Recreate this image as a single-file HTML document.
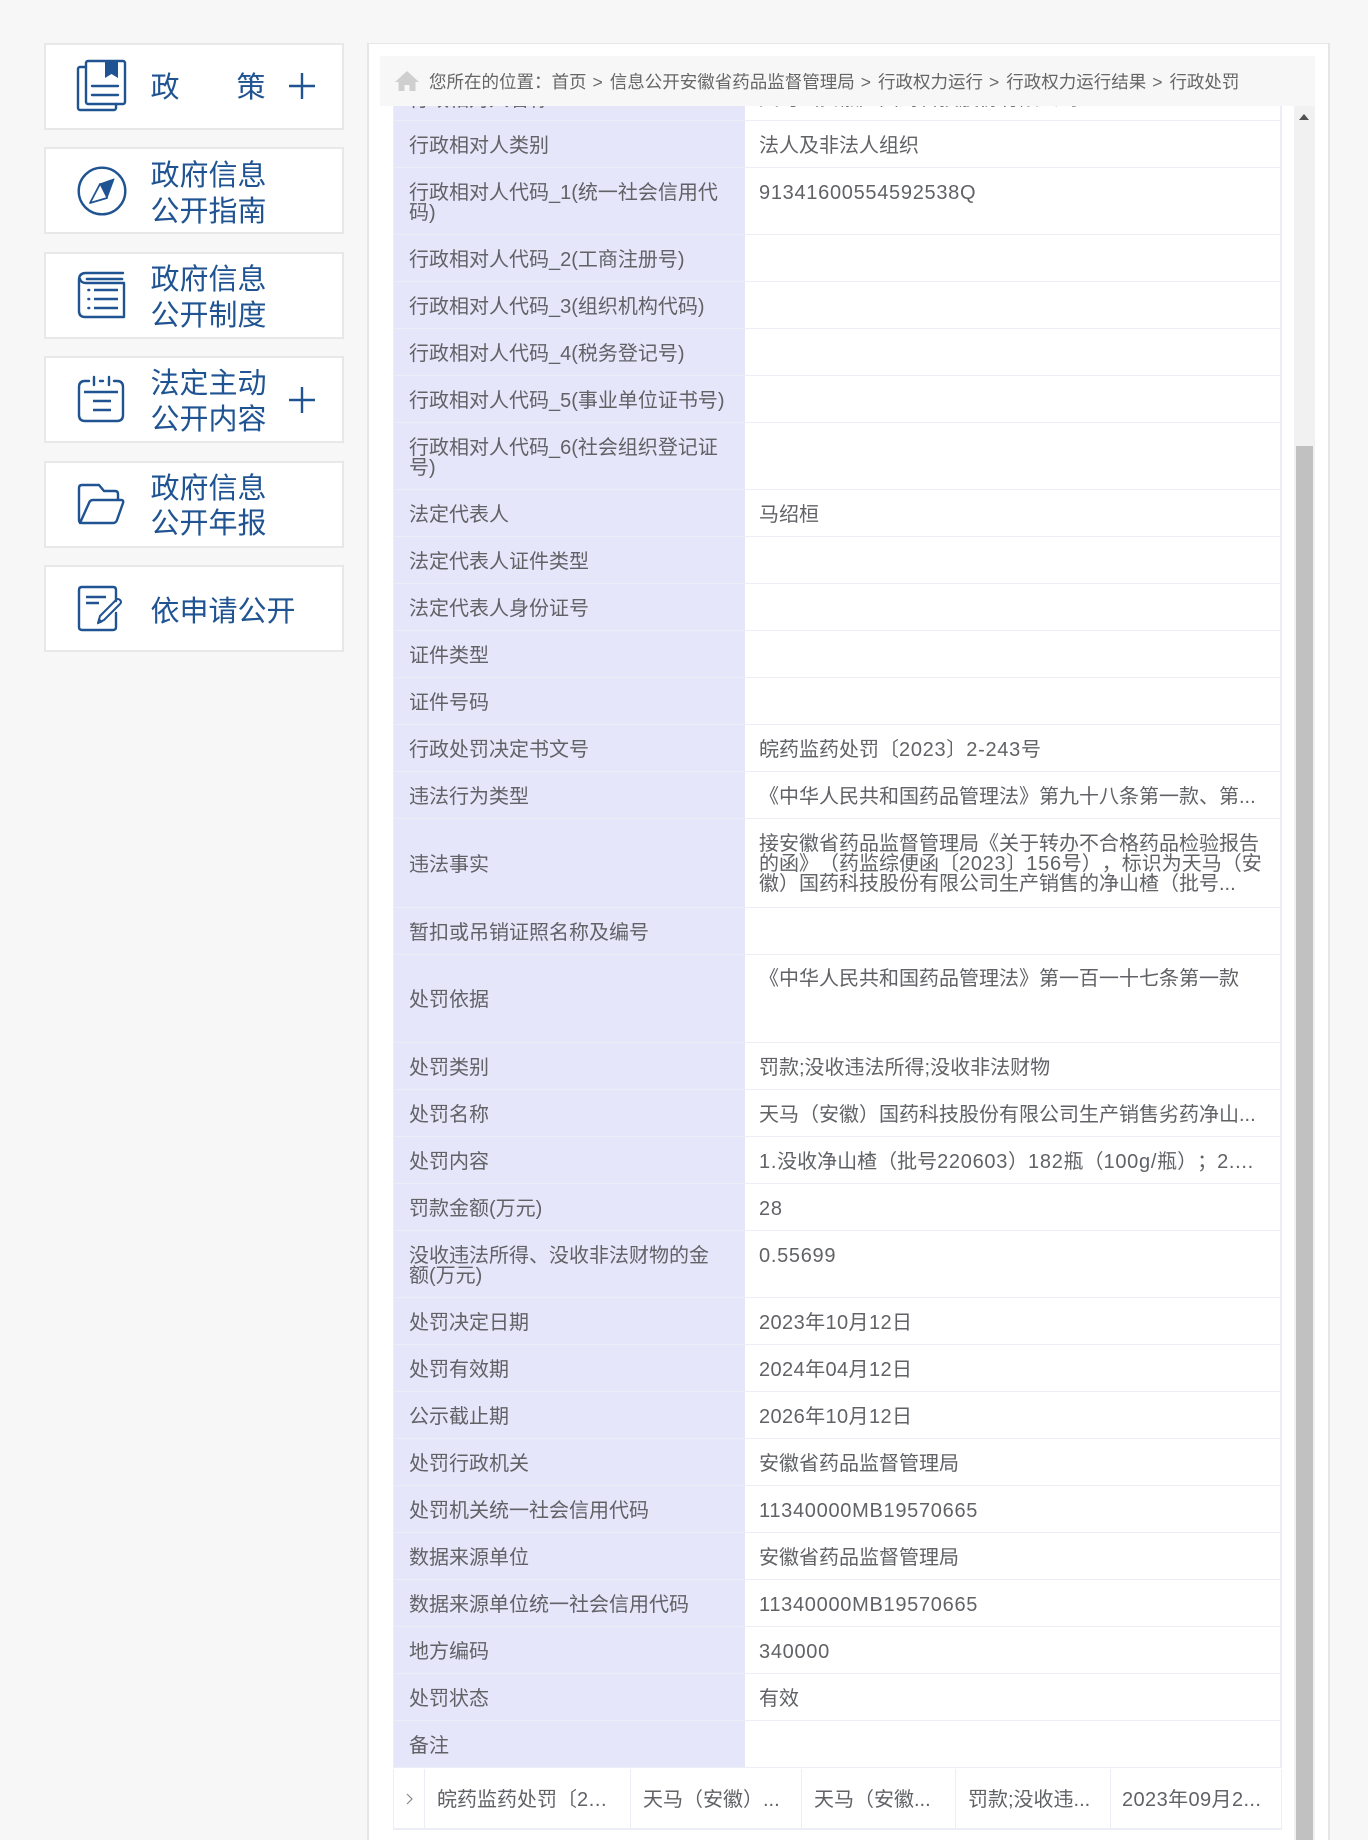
<!DOCTYPE html>
<html lang="zh-CN"><head><meta charset="utf-8"><title>行政处罚</title>
<style>
html,body{margin:0;padding:0;width:1368px;height:1840px;overflow:hidden}
body{position:relative;background:#f7f7f7;font-family:"Liberation Sans","Noto Sans CJK SC",sans-serif;color:#606266;text-spacing-trim:space-all}
.box{position:absolute;left:44px;width:296px;height:83px;background:#fff;border:2px solid #e8e8e8}
.st{position:absolute;left:150.500px;font-size:29px;line-height:35.5px;color:#1f5391;white-space:nowrap}
.panel{position:absolute;left:367px;top:43px;width:959px;height:1797px;background:#fff;border:1px solid #e6e6e6;border-width:1px 2px 0;overflow:hidden}
.crumb{position:absolute;left:380px;top:56px;width:935px;height:50px;background:#f7f7f7;z-index:5}
.crumb span{position:absolute;left:49px;top:13px;font-size:17.5px;line-height:26px;white-space:nowrap;color:#666}
.crumb i{font-style:normal;margin:0 7px 0 6px}
.tb{position:absolute;left:393px;top:73px;width:886px;background:#fff;border-left:1px solid #ebeef5;border-right:2px solid #ebeef5}
.r{position:relative;display:flex;width:100%;box-sizing:border-box;border-bottom:1px solid #ebeef5}
.l{width:351px;box-sizing:border-box;background:#e6e6fa;padding:3px 15px 0;font-size:20px;line-height:20px;display:flex;align-items:center;box-shadow:0 1px 0 #ebeef5;white-space:nowrap}
.v{flex:1;padding:15px 0 0 14px;font-size:20px;line-height:20px;white-space:nowrap}
.n{letter-spacing:.7px}
.d{letter-spacing:.4px}
.sb{position:absolute;left:1294px;top:106px;width:21px;height:1734px;background:#f1f1f1}
.th{position:absolute;left:1296px;top:446px;width:17px;height:1394px;background:#c1c1c1}
.ar{position:absolute;left:1299px;top:114px;width:0;height:0;border:5px solid transparent;border-top:0;border-bottom:6px solid #505050}
.ex{position:absolute;left:393px;top:1769px;width:887px;height:59px;background:#fff;border:1px solid #ebeef5;border-width:0 1px 2px 1px;box-sizing:content-box}
.ex b{position:absolute;top:0;height:59px;width:1px;background:#ebeef5}
.ex span{position:absolute;top:20px;font-size:20px;line-height:22px;font-weight:400;white-space:nowrap}
svg{position:absolute;left:0;top:0}
</style></head><body>
<div class="box" style="top:43px"></div>
<div class="box" style="top:147px"></div>
<div class="box" style="top:252px"></div>
<div class="box" style="top:356px"></div>
<div class="box" style="top:461px"></div>
<div class="box" style="top:565px"></div>

<div class="st" style="top:71px">政</div><div class="st" style="left:236.500px;top:71px">策</div>
<div class="st" style="top:159px">政府信息<br>公开指南</div>
<div class="st" style="top:263px">政府信息<br>公开制度</div>
<div class="st" style="top:367px">法定主动<br>公开内容</div>
<div class="st" style="top:471.500px">政府信息<br>公开年报</div>
<div class="st" style="top:595px">依申请公开</div>

<svg width="360" height="660" viewBox="0 0 360 660" fill="none" stroke="#1f5391" stroke-width="2.4" stroke-linecap="round" stroke-linejoin="round" style="z-index:2">
<!-- icon 1 -->
<path d="M86 67H80a2 2 0 0 0-2 2v39a2 2 0 0 0 2 2h34a2 2 0 0 0 2-2v-4"/>
<rect x="86" y="61" width="39" height="43" rx="2"/>
<path d="M105 61h13v17l-6.500-4-6.500 4z" fill="#1f5391" stroke="none"/>
<path d="M92 86h26M92 95h26"/>
<!-- plus -->
<path d="M289 86h26M302 73v26M289 400h26M302 387v26" stroke-linecap="butt"/>
<!-- icon 2 -->
<circle cx="102" cy="191" r="23.300"/>
<path d="M114 179L100 184L107 198Z" fill="#1f5391" stroke="#1f5391" stroke-width="1"/>
<path d="M100 184L90 203L107 198" stroke-width="1.800"/>
<!-- icon 3 -->
<path d="M123 273H86q-7 0-7 7V311q0 6 6 6H124V283H86q-5 0-6-4"/>
<path d="M87 279H122" stroke-width="2.600"/>
<path d="M94 290H118M94 299H118M94 308H118" stroke-width="2.600" stroke-linecap="butt"/>
<path d="M88.500 290h.6M88.500 299h.6M88.500 308h.6" stroke-width="2.600"/>
<!-- icon 4 -->
<path d="M89 381H85q-6 0-6 6V415q0 6 6 6H117q6 0 6-6V387q0-6-6-6H114M100 381h3"/>
<path d="M94 377v8M109 377v8"/>
<path d="M84 392H118M93 401H111M93 410H111" stroke-linecap="butt"/>
<!-- icon 5 -->
<path d="M118 500V494q0-3-3-3H104l-5-6H82q-3 0-3 3V520q0 3 3 3H113q3 0 4-3l6-17q1-3-2-3H93q-3 0-4 3L80 523"/>
<!-- icon 6 -->
<path d="M116 601V590q0-3-3-3H82q-3 0-3 3V627q0 3 3 3H113q3 0 3-3V613"/>
<path d="M86 597H106M86 603H99" stroke-linecap="butt"/>
<path d="M98 623L100 616L116 600q2-2 4 0q2 2 0 4L104 620Z" stroke-width="2"/>
<path d="M97 624.500L99 618L103 622Z" fill="#1f5391" stroke="none"/>
</svg>

<div class="panel"></div>

<div class="tb">
<div class="r" style="height:48px"><div class="l" style="padding-top:6px">行政相对人名称</div><div class="v" style="padding-top:16px">天马（安徽）国药科技股份有限公司</div></div>
<div class="r" style="height:47px"><div class="l">行政相对人类别</div><div class="v">法人及非法人组织</div></div>
<div class="r" style="height:67px"><div class="l">行政相对人代码_1(统一社会信用代<br>码)</div><div class="v n">91341600554592538Q</div></div>
<div class="r" style="height:47px"><div class="l">行政相对人代码_2(工商注册号)</div><div class="v"></div></div>
<div class="r" style="height:47px"><div class="l">行政相对人代码_3(组织机构代码)</div><div class="v"></div></div>
<div class="r" style="height:47px"><div class="l">行政相对人代码_4(税务登记号)</div><div class="v"></div></div>
<div class="r" style="height:47px"><div class="l">行政相对人代码_5(事业单位证书号)</div><div class="v"></div></div>
<div class="r" style="height:67px"><div class="l">行政相对人代码_6(社会组织登记证<br>号)</div><div class="v"></div></div>
<div class="r" style="height:47px"><div class="l">法定代表人</div><div class="v">马绍桓</div></div>
<div class="r" style="height:47px"><div class="l">法定代表人证件类型</div><div class="v"></div></div>
<div class="r" style="height:47px"><div class="l">法定代表人身份证号</div><div class="v"></div></div>
<div class="r" style="height:47px"><div class="l">证件类型</div><div class="v"></div></div>
<div class="r" style="height:47px"><div class="l">证件号码</div><div class="v"></div></div>
<div class="r" style="height:47px"><div class="l">行政处罚决定书文号</div><div class="v">皖药监药处罚〔<span class="n">2023</span>〕<span class="n">2-243</span>号</div></div>
<div class="r" style="height:47px"><div class="l">违法行为类型</div><div class="v">《中华人民共和国药品管理法》第九十八条第一款、第...</div></div>
<div class="r" style="height:89px"><div class="l">违法事实</div><div class="v">接安徽省药品监督管理局《关于转办不合格药品检验报告<br>的函》（药监综便函〔<span class="n">2023</span>〕<span class="n">156</span>号），标识为天马（安<br>徽）国药科技股份有限公司生产销售的净山楂（批号...</div></div>
<div class="r" style="height:47px"><div class="l">暂扣或吊销证照名称及编号</div><div class="v"></div></div>
<div class="r" style="height:88px"><div class="l">处罚依据</div><div class="v" style="padding-top:14px">《中华人民共和国药品管理法》第一百一十七条第一款</div></div>
<div class="r" style="height:47px"><div class="l">处罚类别</div><div class="v">罚款;没收违法所得;没收非法财物</div></div>
<div class="r" style="height:47px"><div class="l">处罚名称</div><div class="v">天马（安徽）国药科技股份有限公司生产销售劣药净山...</div></div>
<div class="r" style="height:47px"><div class="l">处罚内容</div><div class="v"><span class="n">1.</span>没收净山楂（批号<span class="n">220603</span>）<span class="n">182</span>瓶（<span class="n">100g/</span>瓶）；<span class="n">2....</span></div></div>
<div class="r" style="height:47px"><div class="l">罚款金额(万元)</div><div class="v n">28</div></div>
<div class="r" style="height:67px"><div class="l">没收违法所得、没收非法财物的金<br>额(万元)</div><div class="v n">0.55699</div></div>
<div class="r" style="height:47px"><div class="l">处罚决定日期</div><div class="v d">2023年10月12日</div></div>
<div class="r" style="height:47px"><div class="l">处罚有效期</div><div class="v d">2024年04月12日</div></div>
<div class="r" style="height:47px"><div class="l">公示截止期</div><div class="v d">2026年10月12日</div></div>
<div class="r" style="height:47px"><div class="l">处罚行政机关</div><div class="v">安徽省药品监督管理局</div></div>
<div class="r" style="height:47px"><div class="l">处罚机关统一社会信用代码</div><div class="v n">11340000MB19570665</div></div>
<div class="r" style="height:47px"><div class="l">数据来源单位</div><div class="v">安徽省药品监督管理局</div></div>
<div class="r" style="height:47px"><div class="l">数据来源单位统一社会信用代码</div><div class="v n">11340000MB19570665</div></div>
<div class="r" style="height:47px"><div class="l">地方编码</div><div class="v n">340000</div></div>
<div class="r" style="height:47px"><div class="l">处罚状态</div><div class="v">有效</div></div>
<div class="r" style="height:47px"><div class="l">备注</div><div class="v"></div></div>
</div>

<div class="ex">
<b style="left:30px"></b><b style="left:236px"></b><b style="left:407px"></b><b style="left:561px"></b><b style="left:716px"></b>
<svg width="20" height="59" viewBox="0 0 20 59" fill="none" stroke="#888" stroke-width="1.200" style="left:8px"><path d="M5 25l5 5-5 5"/></svg>
<span style="left:43px">皖药监药处罚〔<span style="position:static;letter-spacing:.6px">2...</span></span>
<span style="left:249px">天马（安徽）...</span>
<span style="left:420px">天马（安徽...</span>
<span style="left:574px">罚款;没收违...</span>
<span style="left:728px;letter-spacing:.4px">2023年09月2...</span>
</div>

<div class="sb"></div><div class="th"></div><div class="ar"></div>

<div class="crumb">
<svg width="26" height="22" viewBox="0 0 26 22" style="left:14px;top:14px"><path d="M13 1L1 12h3.500v9h6v-6h5v6h6v-9H25z" fill="#cfcfcf"/></svg>
<span>您所在的位置：首页<i>&gt;</i>信息公开安徽省药品监督管理局<i>&gt;</i>行政权力运行<i>&gt;</i>行政权力运行结果<i>&gt;</i>行政处罚</span>
</div>
</body></html>
